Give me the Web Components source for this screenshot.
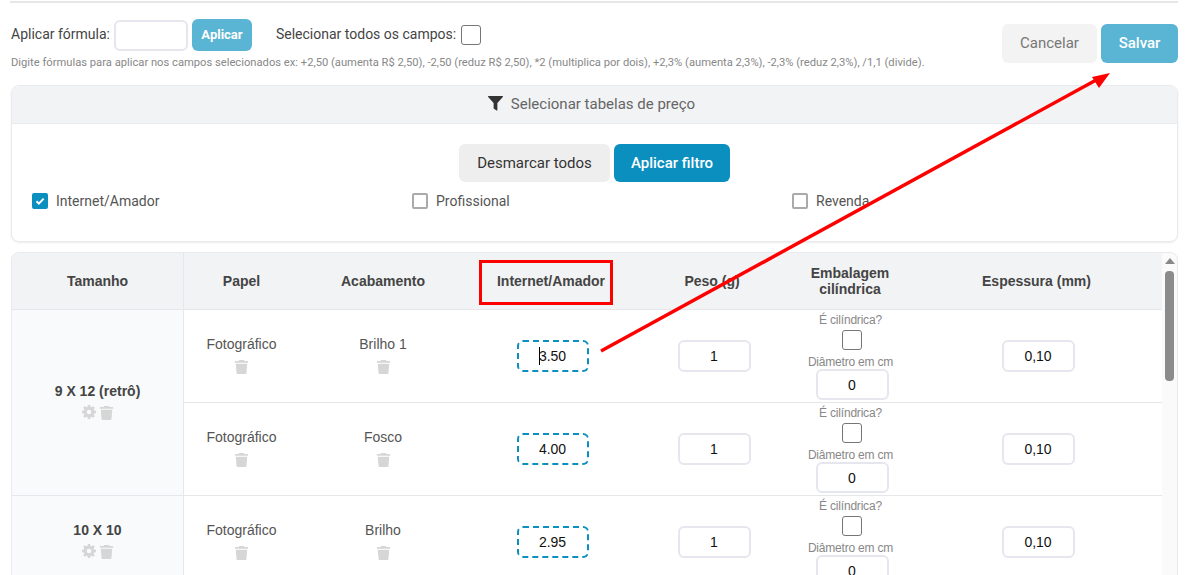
<!DOCTYPE html>
<html lang="pt-BR">
<head>
<meta charset="utf-8">
<title>Tabelas de preço</title>
<style>
    html, body { margin: 0; height: 100%; overflow: hidden; background: #fff; }
</style>
</head>
<body>
<price-page>
    <formula-bar></formula-bar>
    <filter-card></filter-card>
    <price-table>
        <size-group label="9 X 12 (retrô)">
            <price-row paper="Fotográfico" finish="Brilho 1" price="3.50" caret></price-row>
            <price-row paper="Fotográfico" finish="Fosco" price="4.00"></price-row>
        </size-group>
        <size-group label="10 X 10">
            <price-row paper="Fotográfico" finish="Brilho" price="2.95"></price-row>
        </size-group>
    </price-table>
    <markup-overlay></markup-overlay>
</price-page>

<script>
const ROBOTO = 'Roboto, "Liberation Sans", sans-serif';
const ARIAL = '"Liberation Sans", Arial, sans-serif';
const ROW_COLUMNS = '115px 168px 168px 158px 118px 1fr';

class UiIcon extends HTMLElement {
    constructor() {
        super();
        this.attachShadow({ mode: 'open' });
    }

    connectedCallback() {
        const paths = {
            trash: '<path d="M5.500 1h5l.6 1.200H14.500a.6.6 0 0 1 .6.6V4H.9V2.800a.6.6 0 0 1 .6-.6h3.400z"/><path d="M1.900 5h12.200l-.8 10a1.200 1.200 0 0 1-1.200 1H3.900a1.200 1.200 0 0 1-1.200-1z"/>',
            gear: '<path fill-rule="evenodd" d="M6.700 0h2.600l.4 2.200 1.200.5 1.900-1.300 1.800 1.800-1.300 1.900.5 1.200 2.200.4v2.600l-2.200.4-.5 1.200 1.300 1.900-1.800 1.800-1.900-1.300-1.200.5-.4 2.200H6.700l-.4-2.200-1.200-.5-1.900 1.300-1.800-1.800 1.300-1.900-.5-1.200L0 9.300V6.700l2.200-.4.5-1.200L1.400 3.200 3.200 1.400l1.900 1.300 1.200-.5zM8 5.400a2.600 2.600 0 1 0 0 5.200 2.600 2.600 0 0 0 0-5.200z"/>',
            filter: '<path d="M.6 0h14.800c.5 0 .8.600.4 1L10 7.500V15c0 .5-.5.700-.9.500L6.400 13.500a.6.600 0 0 1-.4-.5V7.500L.2 1C-.2.600.1 0 .6 0z"/>'
        };
        const size = this.getAttribute('size') || 15;
        this.shadowRoot.innerHTML = `
            <style>
                :host {
                    display: inline-block;
                    width: ${size}px;
                    height: ${size}px;
                    color: #d6d6d6;
                    line-height: 0;
                }
                svg { width: 100%; height: 100%; fill: currentColor; }
            </style>
            <svg viewBox="0 0 16 16">${paths[this.getAttribute('name')]}</svg>
        `;
    }
}

class UiButton extends HTMLElement {
    constructor() {
        super();
        this.attachShadow({ mode: 'open' });
    }

    connectedCallback() {
        this.shadowRoot.innerHTML = `
            <style>
                :host {
                    display: inline-flex;
                    align-items: center;
                    justify-content: center;
                    box-sizing: border-box;
                    padding-bottom: 2px;
                    border-radius: 6px;
                    font-family: ${ROBOTO};
                    font-size: 15px;
                    font-weight: 500;
                    white-space: nowrap;
                    cursor: pointer;
                }
                :host([kind="info"]) { background: #5ab4d3; color: #fff; }
                :host([kind="muted"]) { background: #f3f3f3; color: #777; font-weight: 400; }
                :host([kind="light"]) { background: #eeeeee; color: #333; font-weight: 400; padding-bottom: 0; }
                :host([kind="primary"]) { background: #0a8fbf; color: #fff; font-weight: 500; padding-bottom: 0; }
            </style>
            <slot></slot>
        `;
    }
}

class CheckMark extends HTMLElement {
    constructor() {
        super();
        this.attachShadow({ mode: 'open' });
    }

    connectedCallback() {
        const checked = this.hasAttribute('checked');
        this.shadowRoot.innerHTML = `
            <style>
                :host {
                    display: inline-flex;
                    align-items: center;
                    justify-content: center;
                    box-sizing: border-box;
                    width: 20px;
                    height: 20px;
                    border: 1px solid #767676;
                    border-radius: 3px;
                    background: #fff;
                }
                :host([small]) {
                    width: 16px;
                    height: 16px;
                    border: 2px solid #aaa;
                    border-radius: 2px;
                }
                :host([checked]) { background: #0a8fbf; border-color: #0a8fbf; }
                svg { width: 10px; height: 10px; }
            </style>
            ${checked ? '<svg viewBox="0 0 10 10"><path d="M1.500 5.200l2.400 2.400 4.700-5" fill="none" stroke="#fff" stroke-width="2"/></svg>' : ''}
        `;
    }
}

class NumField extends HTMLElement {
    constructor() {
        super();
        this.attachShadow({ mode: 'open' });
    }

    connectedCallback() {
        this.shadowRoot.innerHTML = `
            <style>
                :host {
                    display: inline-flex;
                    align-items: center;
                    justify-content: center;
                    box-sizing: border-box;
                    width: 73px;
                    height: 32px;
                    border: 2px solid #e6e7ee;
                    border-radius: 6px;
                    background: #fff;
                    color: #111;
                    font-family: ${ARIAL};
                    font-size: 14px;
                    letter-spacing: 0;
                }
                :host([dashed]) { width: 72px; border: 2px dashed #0a8fbf; }
                .value { position: relative; }
                .caret {
                    position: absolute;
                    left: 0;
                    top: -1px;
                    width: 1px;
                    height: 18px;
                    background: #000;
                }
            </style>
            <span class="value">${this.hasAttribute('caret') ? '<i class="caret"></i>' : ''}<slot></slot></span>
        `;
    }
}

class FormulaBar extends HTMLElement {
    constructor() {
        super();
        this.attachShadow({ mode: 'open' });
    }

    connectedCallback() {
        this.shadowRoot.innerHTML = `
            <style>
                :host {
                    display: flex;
                    justify-content: space-between;
                    align-items: flex-start;
                    font-family: ${ROBOTO};
                    padding-top: 16px;
                }
                .line {
                    display: flex;
                    align-items: center;
                    font-size: 14px;
                    color: #444;
                }
                .line > span { padding-bottom: 2px; }
                .line num-field { width: 74px; height: 31px; margin: 0 4px 0 4px; }
                .line ui-button { width: 60px; height: 32px; font-size: 13px; font-weight: 700; }
                .select { margin-left: 24px; margin-right: 5px; }
                .hint {
                    margin-top: 5px;
                    font-size: 11.200px;
                    line-height: 14px;
                    color: #888;
                    white-space: nowrap;
                }
                .actions { display: flex; gap: 4px; padding-top: 5px; }
                .actions ui-button { height: 39px; }
                .cancel { width: 95px; }
                .save { width: 77px; }
            </style>
            <div>
                <div class="line">
                    <span>Aplicar fórmula:</span>
                    <num-field></num-field>
                    <ui-button kind="info">Aplicar</ui-button>
                    <span class="select">Selecionar todos os campos:</span>
                    <check-mark></check-mark>
                </div>
                <div class="hint">Digite fórmulas para aplicar nos campos selecionados ex: +2,50 (aumenta R$ 2,50), -2,50 (reduz R$ 2,50), *2 (multiplica por dois), +2,3% (aumenta 2,3%), -2,3% (reduz 2,3%), /1,1 (divide).</div>
            </div>
            <div class="actions">
                <ui-button class="cancel" kind="muted">Cancelar</ui-button>
                <ui-button class="save" kind="info">Salvar</ui-button>
            </div>
        `;
    }
}

class FilterCard extends HTMLElement {
    constructor() {
        super();
        this.attachShadow({ mode: 'open' });
    }

    connectedCallback() {
        this.shadowRoot.innerHTML = `
            <style>
                :host {
                    display: block;
                    box-sizing: border-box;
                    height: 157px;
                    margin-top: 15px;
                    border: 1px solid #e9eaee;
                    border-radius: 8px;
                    box-shadow: 0 1px 2px rgba(0, 0, 0, .08);
                    overflow: hidden;
                    font-family: ${ROBOTO};
                    font-size: 14px;
                    color: #555;
                }
                .head {
                    display: flex;
                    align-items: center;
                    justify-content: center;
                    gap: 8px;
                    box-sizing: content-box;
                    height: 35px;
                    padding: 0 6px 2px 0;
                    background: #f2f3f5;
                    border-bottom: 1px solid #e9eaee;
                    color: #666;
                    font-size: 15px;
                }
                .head ui-icon { color: #333; }
                .buttons {
                    display: flex;
                    justify-content: center;
                    gap: 4px;
                    padding-top: 20px;
                }
                .buttons ui-button { height: 38px; }
                .off { width: 151px; }
                .apply { width: 116px; }
                .tables {
                    display: grid;
                    grid-template-columns: repeat(3, 380px);
                    padding: 11px 0 0 20px;
                }
                label { display: flex; align-items: center; gap: 8px; line-height: 16px; }
            </style>
            <div class="head"><ui-icon name="filter" size="15"></ui-icon><span>Selecionar tabelas de preço</span></div>
            <div class="buttons">
                <ui-button class="off" kind="light">Desmarcar todos</ui-button>
                <ui-button class="apply" kind="primary">Aplicar filtro</ui-button>
            </div>
            <div class="tables">
                <label><check-mark small checked></check-mark>Internet/Amador</label>
                <label><check-mark small></check-mark>Profissional</label>
                <label><check-mark small></check-mark>Revenda</label>
            </div>
        `;
    }
}

class PriceTable extends HTMLElement {
    constructor() {
        super();
        this.attachShadow({ mode: 'open' });
    }

    connectedCallback() {
        this.shadowRoot.innerHTML = `
            <style>
                :host {
                    display: flex;
                    box-sizing: border-box;
                    height: 340px;
                    margin-top: 10px;
                    border: 1px solid #e9eaee;
                    border-bottom: 0;
                    border-radius: 8px 8px 0 0;
                    overflow: hidden;
                    font-family: ${ARIAL};
                    font-size: 14px;
                    color: #555;
                }
                .content { flex: 1; min-width: 0; }
                .head {
                    display: grid;
                    grid-template-columns: 172px ${ROW_COLUMNS};
                    height: 56px;
                    background: #f2f3f5;
                    border-bottom: 1px solid #e6e7ea;
                    font-weight: 700;
                    color: #444;
                    text-align: center;
                }
                .head div { display: flex; align-items: center; justify-content: center; line-height: 16px; }
                .head div:first-child { border-right: 1px solid #e6e7ea; }
                .head .nudge { padding-right: 4px; }
                .bar {
                    position: relative;
                    flex: none;
                    width: 15px;
                    background: #fafafa;
                }
                .arrow {
                    position: absolute;
                    top: 5px;
                    left: 3px;
                    border: 5px solid transparent;
                    border-top: 0;
                    border-bottom: 6px solid #888;
                }
                .thumb {
                    position: absolute;
                    top: 18px;
                    left: 3px;
                    width: 9px;
                    height: 110px;
                    border-radius: 4px;
                    background: #8b8b8b;
                }
            </style>
            <div class="content">
                <div class="head">
                    <div>Tamanho</div><div>Papel</div><div>Acabamento</div><div>Internet/Amador</div>
                    <div class="nudge">Peso (g)</div><div class="nudge">Embalagem<br>cilíndrica</div><div>Espessura (mm)</div>
                </div>
                <slot></slot>
            </div>
            <div class="bar"><i class="arrow"></i><i class="thumb"></i></div>
        `;
    }
}

class SizeGroup extends HTMLElement {
    constructor() {
        super();
        this.attachShadow({ mode: 'open' });
    }

    connectedCallback() {
        this.shadowRoot.innerHTML = `
            <style>
                :host {
                    display: grid;
                    grid-template-columns: 172px 1fr;
                    border-bottom: 1px solid #e6e7ea;
                }
                .size {
                    display: flex;
                    flex-direction: column;
                    align-items: center;
                    justify-content: center;
                    gap: 6px;
                    padding-bottom: 3px;
                    background: #f9fafc;
                    border-right: 1px solid #e6e7ea;
                    font-weight: 700;
                    color: #444;
                }
                .tools { display: flex; gap: 3px; line-height: 0; }
                ::slotted(price-row:not(:last-child)) { border-bottom: 1px solid #e6e7ea; }
            </style>
            <div class="size">
                <span>${this.getAttribute('label')}</span>
                <div class="tools"><ui-icon name="gear" size="14"></ui-icon><ui-icon name="trash"></ui-icon></div>
            </div>
            <div><slot></slot></div>
        `;
    }
}

class PriceRow extends HTMLElement {
    constructor() {
        super();
        this.attachShadow({ mode: 'open' });
    }

    connectedCallback() {
        const caret = this.hasAttribute('caret') ? 'caret' : '';
        this.shadowRoot.innerHTML = `
            <style>
                :host {
                    display: grid;
                    grid-template-columns: ${ROW_COLUMNS};
                    height: 92px;
                }
                .cell {
                    display: flex;
                    flex-direction: column;
                    align-items: center;
                    justify-content: center;
                    overflow: visible;
                }
                .named { gap: 7px; padding-bottom: 2px; }
                .named span { line-height: 16px; }
                .price { padding-left: 3px; }
                .last { padding-left: 3px; }
                .tube {
                    justify-content: flex-start;
                    padding-top: 3px;
                    font-size: 12px;
                    letter-spacing: -.2px;
                    color: #888;
                    line-height: 14px;
                }
                .tube span { padding-right: 3px; }
                .tube check-mark { margin: 3px 0 5px; }
                .tube num-field { height: 31px; flex: none; color: #111; }
            </style>
            <div class="cell named"><span>${this.getAttribute('paper')}</span><ui-icon name="trash"></ui-icon></div>
            <div class="cell named"><span>${this.getAttribute('finish')}</span><ui-icon name="trash"></ui-icon></div>
            <div class="cell price"><num-field dashed ${caret}>${this.getAttribute('price')}</num-field></div>
            <div class="cell"><num-field>1</num-field></div>
            <div class="cell tube">
                <span>É cilíndrica?</span>
                <check-mark></check-mark>
                <span>Diâmetro em cm</span>
                <num-field>0</num-field>
            </div>
            <div class="cell last"><num-field>0,10</num-field></div>
        `;
    }
}

// red annotations drawn on top of the screenshot
class MarkupOverlay extends HTMLElement {
    constructor() {
        super();
        this.attachShadow({ mode: 'open' });
    }

    connectedCallback() {
        this.shadowRoot.innerHTML = `
            <style>
                :host { position: absolute; inset: 0; pointer-events: none; }
                svg { display: block; }
            </style>
            <svg width="1187" height="575" viewBox="0 0 1187 575">
                <rect x="480.500" y="261.500" width="131" height="42" fill="none" stroke="#f00" stroke-width="3"/>
                <line x1="601" y1="351" x2="1098" y2="79" stroke="#f00" stroke-width="3.500"/>
                <polygon points="1110,73 1092,77 1099,88" fill="#f00"/>
            </svg>
        `;
    }
}

class PricePage extends HTMLElement {
    constructor() {
        super();
        this.attachShadow({ mode: 'open' });
    }

    connectedCallback() {
        this.shadowRoot.innerHTML = `
            <style>
                :host {
                    display: block;
                    position: relative;
                    box-sizing: border-box;
                    height: 575px;
                    padding: 1px 9px 0 11px;
                    overflow: hidden;
                }
                .rule { height: 2px; margin-left: -1px; background: #e6e6e6; }
            </style>
            <div class="rule"></div>
            <slot></slot>
        `;
    }
}

customElements.define('ui-icon', UiIcon);
customElements.define('ui-button', UiButton);
customElements.define('check-mark', CheckMark);
customElements.define('num-field', NumField);
customElements.define('formula-bar', FormulaBar);
customElements.define('filter-card', FilterCard);
customElements.define('price-table', PriceTable);
customElements.define('size-group', SizeGroup);
customElements.define('price-row', PriceRow);
customElements.define('markup-overlay', MarkupOverlay);
customElements.define('price-page', PricePage);
</script>
</body>
</html>
